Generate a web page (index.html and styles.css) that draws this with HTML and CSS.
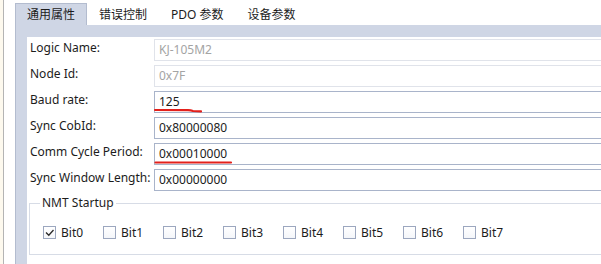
FILE: index.html
```html
<!DOCTYPE html>
<html lang="zh-CN">
<head>
  <meta charset="UTF-8" />
  <title>通用属性</title>
  <link rel="stylesheet" href="styles.css">
</head>
<body>
  <div class="window">
    <div class="edge"></div>

    <div class="tabctl">
      <div class="tabbar">
        <div class="tab active">通用属性</div>
        <div class="tab">错误控制</div>
        <div class="tab">PDO 参数</div>
        <div class="tab">设备参数</div>
      </div>

      <div class="page">
        <div class="panel">
          <div class="fields">
            <label>Logic Name:</label>
            <div class="box disabled">KJ-105M2</div>

            <label>Node Id:</label>
            <div class="box disabled">0x7F</div>

            <label>Baud rate:</label>
            <div class="box">125
              <svg class="mark" width="60" height="6" viewBox="0 0 60 6">
                <path d="M1 2 L34 2.2 Q37 2.4 39 3 L47 3.4" />
              </svg>
            </div>

            <label>Sync CobId:</label>
            <div class="box">0x80000080</div>

            <label>Comm Cycle Period:</label>
            <div class="box">0x00010000
              <svg class="mark" width="90" height="6" viewBox="0 0 90 6">
                <path d="M1.5 2.5 L77 2.5" />
              </svg>
            </div>

            <label>Sync Window Length:</label>
            <div class="box">0x00000000</div>
          </div>

          <fieldset class="nmt">
            <legend>NMT Startup</legend>
            <div class="bits">
              <div class="bit">
                <span class="check on">
                  <svg width="11" height="11" viewBox="0 0 11 11"><polyline points="2,5.5 4.8,8.3 9.5,3" /></svg>
                </span>Bit0
              </div>
              <div class="bit"><span class="check"></span>Bit1</div>
              <div class="bit"><span class="check"></span>Bit2</div>
              <div class="bit"><span class="check"></span>Bit3</div>
              <div class="bit"><span class="check"></span>Bit4</div>
              <div class="bit"><span class="check"></span>Bit5</div>
              <div class="bit"><span class="check"></span>Bit6</div>
              <div class="bit"><span class="check"></span>Bit7</div>
            </div>
          </fieldset>
        </div>
      </div>
    </div>
  </div>
</body>
</html>
```

FILE: styles.css
```css
:root {
  --tab-bg: #cfd6e5;
  --tab-border: #b3bccf;
  --input-border: #a9b4ca;
  --input-disabled: #e0e3ea;
  --group-border: #d7dce6;
  --text-color: #1c1c1c;
  --muted: #a4a4a4;
  --mark: #e3201b;
}

* {
  margin: 0;
  padding: 0;
  box-sizing: border-box;
}

body {
  font-family: 'Noto Sans', 'Noto Sans CJK SC', sans-serif;
  font-size: 12px;
  color: var(--text-color);
  background: #ffffff;
  overflow: hidden;
}

/* the dialog is wider than the shot, so right-hand borders are left off */
.window {
  display: flex;
  width: 100%;
  height: 264px;
}

.edge {
  width: 4px;
  background: #fdf9ee;
  border-right: 1px solid #b4b4b4;
  margin-right: 11px;
}

.tabctl {
  flex: 1;
  display: flex;
  flex-direction: column;
  min-width: 0;
}

.tabbar {
  height: 25px;
  display: flex;
  align-items: flex-end;
}

.tab {
  height: 22px;
  line-height: 21px;
  padding: 0 11px;
  border: 1px solid transparent;
  border-bottom: none;
  white-space: nowrap;
}

.tab.active {
  background: var(--tab-bg);
  border-color: var(--tab-border);
}

.page {
  flex: 1;
  background: var(--tab-bg);
  border-left: 1px solid var(--tab-border);
  padding: 12px 0 0 11px;
  display: flex;
}

.panel {
  flex: 1;
  min-width: 0;
  background: #ffffff;
  padding: 2px 0 0 3px;
}

.fields {
  display: grid;
  grid-template-columns: 124px 1fr;
  grid-auto-rows: 22px;
  row-gap: 4px;
}

.fields label {
  line-height: 17px;
  white-space: nowrap;
}

.box {
  position: relative;
  height: 22px;
  line-height: 20px;
  padding: 0 4px;
  border: 1px solid var(--input-border);
  border-right: none;
}

.box.disabled {
  border-color: var(--input-disabled);
  color: var(--muted);
}

.mark {
  position: absolute;
  left: -1px;
  top: 16px;
  overflow: visible;
}

.mark path {
  fill: none;
  stroke: var(--mark);
  stroke-width: 2.2;
  stroke-linecap: round;
  stroke-linejoin: round;
}

.nmt {
  margin: 4px 0 0 -1px;
  border: 1px solid var(--group-border);
  border-right: none;
  padding: 15px 0 15px 10px;
  min-width: 0;
}

.nmt legend {
  padding: 0 2px;
  line-height: 16px;
}

.bits {
  display: flex;
  margin-left: 3px;
}

.bit {
  width: 60px;
  flex-shrink: 0;
  display: flex;
  align-items: center;
  gap: 5px;
  height: 13px;
}

.check {
  width: 13px;
  height: 13px;
  border: 1px solid #9ca7bf;
  background: linear-gradient(#ffffff, #f4f6fa);
  display: flex;
}

.check polyline {
  fill: none;
  stroke: #2a2a2a;
  stroke-width: 1.3;
}
```
